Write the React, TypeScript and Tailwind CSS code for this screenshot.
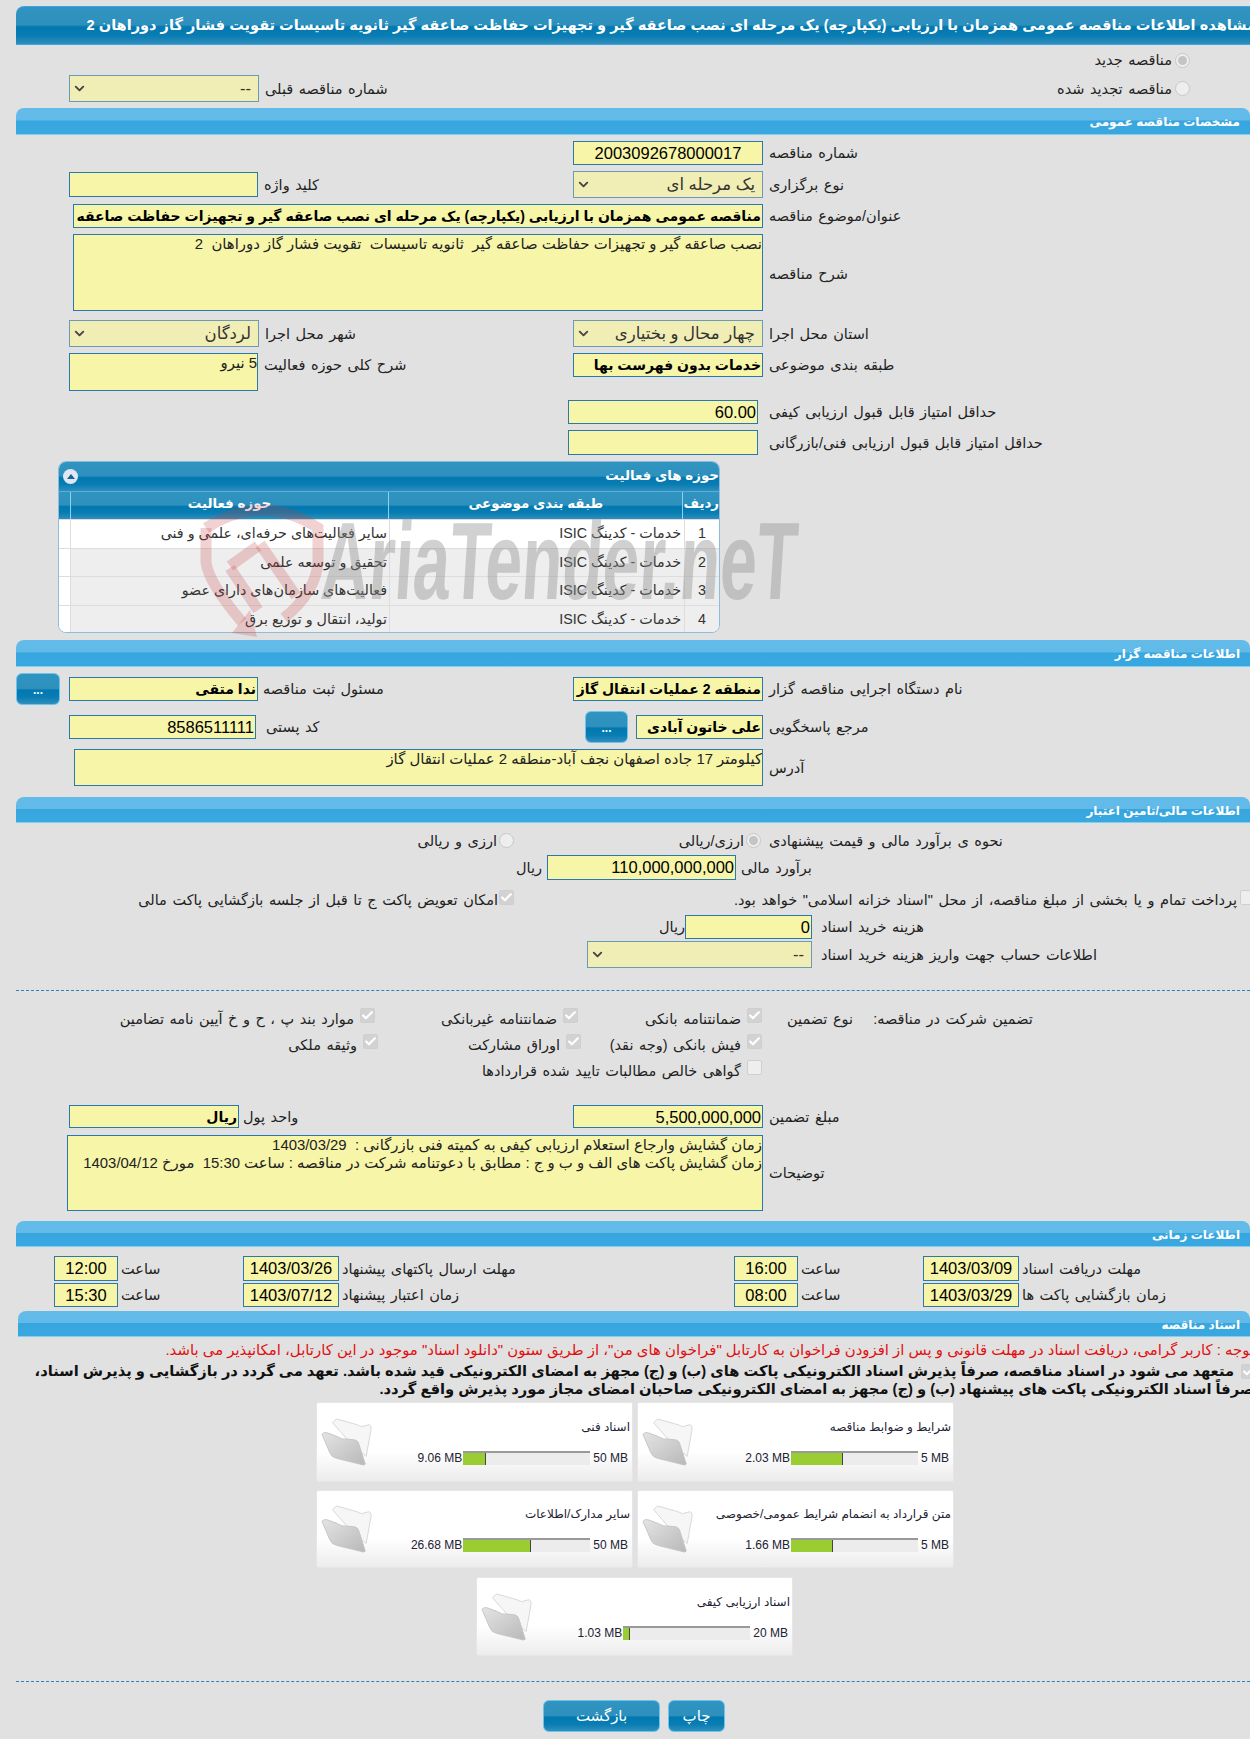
import { ReactNode } from "react";
import { ChevronDown, Check } from "lucide-react";

const DOCS = [
  [
    { title: "اسناد فنی", used: 9.06, max: 50 },
    { title: "شرایط و ضوابط مناقصه", used: 2.03, max: 5 },
  ],
  [
    { title: "سایر مدارک/اطلاعات", used: 26.68, max: 50 },
    { title: "متن قرارداد به انضمام شرایط عمومی/خصوصی", used: 1.66, max: 5 },
  ],
  [{ title: "اسناد ارزیابی کیفی", used: 1.03, max: 20 }],
];

const ACTIVITIES = [
  "سایر فعالیت‌های حرفه‌ای، علمی و فنی",
  "تحقیق و توسعه علمی",
  "فعالیت‌های سازمان‌های دارای عضو",
  "تولید، انتقال و توزیع برق",
];

const darkGrad =
  "bg-[linear-gradient(#3094c0_0%,#2e90bd_48%,#0078b0_54%,#0a7db3_78%,#2f8fbd_100%)]";

function Bar({ title, className }: { title: string; className: string }) {
  return (
    <div
      dir="rtl"
      className={`flex items-center rounded-tl-lg rounded-tr-lg border-b border-[#7fd0f0] bg-[linear-gradient(#63bbea_0%,#62bae9_46%,#37a6df_50%,#3aa8e0_100%)] pr-[10px] pt-[2px] text-[12px] font-bold text-white ${className}`}
    >
      {title}
    </div>
  );
}

function Lbl({ children, className = "" }: { children: ReactNode; className?: string }) {
  return (
    <span dir="rtl" className={`whitespace-nowrap pt-[2px] text-[14.5px] text-[#222] [word-spacing:1.5px] ${className}`}>
      {children}
    </span>
  );
}

function Box({
  children,
  className,
  bold,
}: {
  children?: ReactNode;
  className: string;
  bold?: boolean;
}) {
  return (
    <div
      dir="rtl"
      className={`overflow-hidden whitespace-nowrap border border-[#2b78ad] bg-[#f7f5a8] pr-[1px] leading-[22px] text-black ${
        bold ? "text-[14px] font-bold" : "text-[16.5px]"
      } ${className}`}
    >
      {children}
    </div>
  );
}

function Area({ children, className }: { children?: ReactNode; className: string }) {
  return (
    <div
      dir="rtl"
      className={`shrink-0 overflow-hidden whitespace-pre border border-[#2b78ad] bg-[#f7f5a8] pt-[1px] text-[14.9px] leading-[17.5px] text-[#222] ${className}`}
    >
      {children}
    </div>
  );
}

function Select({ value, className }: { value: string; className: string }) {
  return (
    <div
      className={`flex shrink-0 items-center justify-between border border-[#6a9bb5] bg-[#f0eeb4] pl-[2px] pr-[7px] text-[16.5px] text-[#333] ${className}`}
    >
      <ChevronDown size={15} strokeWidth={3} className="text-[#444]" />
      <span dir="rtl">{value}</span>
    </div>
  );
}

function Radio({ on }: { on?: boolean }) {
  return (
    <span className="flex h-[15px] w-[15px] shrink-0 items-center justify-center rounded-full border border-[#c8c8c8] bg-[#eeeeee]">
      {on && <span className="h-[9px] w-[9px] rounded-full bg-[#c4c4c4]" />}
    </span>
  );
}

function Tick({ on = true, className = "" }: { on?: boolean; className?: string }) {
  return (
    <span
      className={`flex h-[15px] w-[15px] shrink-0 items-center justify-center rounded-[2px] border border-[#cfcfcf] ${
        on ? "bg-[#d2d2d2]" : "bg-[#eeeeee]"
      } ${className}`}
    >
      {on && <Check size={13} strokeWidth={4} className="text-white" />}
    </span>
  );
}

function DotsButton({ className = "" }: { className?: string }) {
  return (
    <div
      className={`flex shrink-0 items-end justify-center rounded-md border border-[#6cc4ec] pb-[8px] text-[12px] font-bold leading-none text-white ${darkGrad} ${className}`}
    >
      ...
    </div>
  );
}

function Folder() {
  return (
    <svg width="54" height="48" viewBox="0 0 54 50" className="shrink-0">
      <defs>
        <linearGradient id="fold" x1="0" y1="0" x2="1" y2="1">
          <stop offset="0" stopColor="#e4e4e4" />
          <stop offset="1" stopColor="#b8b8b8" />
        </linearGradient>
      </defs>
      <path d="M12 5 L16 1 L34 6 Q38 7 42 9 L50 7 Q53 8 52 12 L47 40 L34 30 Z" fill="#f6f6f6" stroke="#d6d6d6" />
      <path d="M1 17 Q3 14 8 16 L16 19 Q22 23 28 22 L36 23 Q39 24 40 29 L46 48 Q45 50 40 48 L16 42 Q11 41 9 36 Z" fill="url(#fold)" stroke="#c4c4c4" />
    </svg>
  );
}

function DocCard({ title, used, max }: { title: string; used: number; max: number }) {
  return (
    <div className="flex h-full w-[317px] items-center rounded-[2px] border border-[#e6e6e6] bg-[linear-gradient(#ffffff_0%,#ffffff_62%,#ececec_100%)] pl-[3px] pr-[2px]">
      <Folder />
      <div className="flex flex-1 flex-col items-end">
        <span dir="rtl" className="text-[12px] leading-[16px] text-[#223]">
          {title}
        </span>
        <div className="mt-[16px] flex items-center text-[12px] leading-[14px] text-[#223]">
          <span className="mr-[1px] whitespace-nowrap">{used.toFixed(2)} MB</span>
          <div className="h-[14px] w-[127px] border-t-2 border-[#999999] bg-[#ececec]">
            <div
              className="h-full border-r border-[#444444] bg-[#9acd32]"
              style={{ width: `${(used / max) * 100}%` }}
            />
          </div>
          <span className="ml-[3px] mr-[2px] whitespace-nowrap">{max} MB</span>
        </div>
      </div>
    </div>
  );
}

function Watermark() {
  return (
    <div className="pointer-events-none absolute left-[200px] top-[500px] h-[140px] w-[610px]">
      <svg width="125" height="138" viewBox="0 0 125 138" className="absolute left-0 top-0" fill="none" stroke="#c43d3d" strokeOpacity="0.24" strokeWidth="11">
        <path d="M6 28 Q62 -8 118 28 V62 Q116 92 84 118" />
        <path d="M6 28 V62 Q8 82 42 122" />
        <path d="M60 44 L96 96" />
        <path d="M30 66 L58 46" />
        <path d="M30 68 L58 110" />
        <path d="M32 133 L57 137 L50 110 Z" fill="#c43d3d" fillOpacity="0.24" stroke="none" />
      </svg>
      <span className="absolute left-[122px] top-[6px] origin-left scale-x-[0.6] -skew-x-[6deg] whitespace-nowrap text-[110px] font-bold leading-[110px] text-[#8f8f8f] opacity-40">
        AriaTender.neT
      </span>
    </div>
  );
}

function ActivityPanel() {
  return (
    <div className="ml-[58px] mt-[6px] h-[172px] w-[662px] overflow-hidden rounded-lg border border-[#8dbcdc] bg-white text-[14.3px]">
      <div
        dir="rtl"
        className={`flex h-[29px] items-center justify-between pl-[4px] text-[13.4px] font-bold text-white ${darkGrad}`}
      >
        <span>حوزه های فعالیت</span>
        <span className="flex h-[15px] w-[15px] items-center justify-center rounded-full bg-[#dfe7f5]">
          <span className="border-x-[4px] border-b-[5px] border-x-transparent border-b-[#1d5f96]" />
        </span>
      </div>
      <div className={`flex h-[28px] border-t border-[#5aaedd] pb-[2px] text-[13.4px] font-bold text-white ${darkGrad}`}>
        <div className="-mb-[2px] w-[12px] border-r border-[#8fd0f0]" />
        <div className="-mb-[2px] flex w-[319px] items-center justify-center border-r border-[#8fd0f0] pb-[2px]">حوزه فعالیت</div>
        <div className="-mb-[2px] flex w-[295px] items-center justify-center border-r border-[#8fd0f0] pb-[2px]">طبقه بندی موضوعی</div>
        <div className="flex flex-1 items-center justify-center">ردیف</div>
      </div>
      {ACTIVITIES.map((a, i) => (
        <div key={i} className="flex h-[28.5px] border-t border-[#dddddd] first:border-[#6cc4ec] text-[#333]">
          <div className="w-[12px] border-r border-[#dddddd] bg-white" />
          <div className={`flex flex-1 ${i === 0 ? "bg-white" : "bg-[#eeeeee]"}`}>
            <div dir="rtl" className="flex w-[319px] items-center border-r border-[#dddddd] pr-[2px]">
              {a}
            </div>
            <div dir="rtl" className="flex w-[295px] items-center border-r border-[#dddddd] pr-[3px]">
              خدمات - کدینگ ISIC
            </div>
            <div className="flex flex-1 items-center justify-center">{i + 1}</div>
          </div>
        </div>
      ))}
    </div>
  );
}

export default function App() {
  return (
    <div className="relative h-[1739px] w-[1250px] overflow-hidden bg-[#e1e1e1] font-['Liberation_Sans','DejaVu_Sans',sans-serif]">
      {/* title */}
      <div
        dir="rtl"
        className={`ml-[16px] mt-[6px] flex h-[39px] w-[1240px] items-center rounded-tl-lg border-y border-[#3ea4e2] text-[14.55px] font-bold whitespace-nowrap text-white ${darkGrad}`}
      >
        مشاهده اطلاعات مناقصه عمومی همزمان با ارزیابی (یکپارچه) یک مرحله ای نصب صاعقه گیر و تجهیزات حفاظت صاعقه گیر ثانویه تاسیسات تقویت فشار گاز دوراهان 2
      </div>

      <div dir="rtl" className="flex h-[30px] items-center gap-[3px] pr-[60px]">
        <Radio on />
        <Lbl>مناقصه جدید</Lbl>
      </div>
      <div className="grid h-[27px] grid-cols-[573px_1fr]">
        <div className="flex items-center gap-[6px] pl-[69px]">
          <Select value="--" className="h-[27px] w-[190px]" />
          <Lbl>شماره مناقصه قبلی</Lbl>
        </div>
        <div dir="rtl" className="flex items-center gap-[3px] pr-[60px]">
          <Radio />
          <Lbl>مناقصه تجدید شده</Lbl>
        </div>
      </div>

      <Bar title="مشخصات مناقصه عمومی" className="ml-[16px] mt-[6px] h-[27px]" />

      <div className="mt-[6px] flex h-[24px] items-center gap-[6px] pl-[573px]">
        <Box className="h-[24px] w-[190px] !pr-0 text-center">2003092678000017</Box>
        <Lbl>شماره مناقصه</Lbl>
      </div>
      <div className="mt-[6px] grid h-[27px] grid-cols-[573px_1fr] items-center">
        <div className="flex items-center gap-[6px] pl-[69px]">
          <Box className="h-[25px] w-[189px]" />
          <Lbl>کلید واژه</Lbl>
        </div>
        <div className="flex items-center gap-[6px]">
          <Select value="یک مرحله ای" className="h-[27px] w-[190px]" />
          <Lbl>نوع برگزاری</Lbl>
        </div>
      </div>
      <div className="mt-[6px] flex h-[24px] items-center gap-[6px] pl-[73px]">
        <Box bold className="h-[24px] w-[690px]">
          مناقصه عمومی همزمان با ارزیابی (یکپارچه) یک مرحله ای نصب صاعقه گیر و تجهیزات حفاظت صاعقه گیر ثانویه تاسیسات تقویت فشار گاز دوراهان 2
        </Box>
        <Lbl>عنوان/موضوع مناقصه</Lbl>
      </div>
      <div className="mt-[6px] flex h-[77px] items-center gap-[6px] pl-[73px]">
        <Area className="h-[77px] w-[690px]">نصب صاعقه گیر و تجهیزات حفاظت صاعقه گیر  ثانویه تاسیسات  تقویت فشار گاز دوراهان  2</Area>
        <Lbl className="pt-[5px]">شرح مناقصه</Lbl>
      </div>
      <div className="mt-[9px] grid h-[27px] grid-cols-[573px_1fr] items-center">
        <div className="flex items-center gap-[6px] pl-[69px]">
          <Select value="لردگان" className="h-[27px] w-[190px]" />
          <Lbl>شهر محل اجرا</Lbl>
        </div>
        <div className="flex items-center gap-[6px]">
          <Select value="چهار محال و بختیاری" className="h-[27px] w-[190px]" />
          <Lbl>استان محل اجرا</Lbl>
        </div>
      </div>
      <div className="mt-[6px] grid h-[38px] grid-cols-[573px_1fr]">
        <div className="flex items-start gap-[6px] pl-[69px]">
          <Area className="h-[38px] w-[189px]">5 نیرو</Area>
          <Lbl>شرح کلی حوزه فعالیت</Lbl>
        </div>
        <div className="flex items-start gap-[6px]">
          <Box bold className="h-[24px] w-[190px]">خدمات بدون فهرست بها</Box>
          <Lbl>طبقه بندی موضوعی</Lbl>
        </div>
      </div>
      <div className="mt-[9px] flex h-[24px] items-center gap-[11px] pl-[568px]">
        <Box className="h-[24px] w-[190px]">60.00</Box>
        <Lbl>حداقل امتیاز قابل قبول ارزیابی کیفی</Lbl>
      </div>
      <div className="mt-[6px] flex h-[25px] items-center gap-[11px] pl-[568px]">
        <Box className="h-[25px] w-[190px]" />
        <Lbl>حداقل امتیاز قابل قبول ارزیابی فنی/بازرگانی</Lbl>
      </div>

      <ActivityPanel />

      <Bar title="اطلاعات مناقصه گزار" className="ml-[16px] mt-[7px] h-[27px]" />

      <div className="mt-[6px] grid h-[32px] grid-cols-[573px_1fr] items-center">
        <div className="flex items-center pl-[16px]">
          <DotsButton className="h-[32px] w-[44px]" />
          <Box bold className="ml-[9px] h-[24px] w-[189px]">ندا متقی</Box>
          <Lbl className="ml-[5px]">مسئول ثبت مناقصه</Lbl>
        </div>
        <div className="flex items-center gap-[6px]">
          <Box bold className="h-[24px] w-[190px]">منطقه 2 عملیات انتقال گاز</Box>
          <Lbl>نام دستگاه اجرایی مناقصه گزار</Lbl>
        </div>
      </div>
      <div className="mt-[6px] grid h-[32px] grid-cols-[573px_1fr] items-center">
        <div className="flex items-center gap-[10px] pl-[69px]">
          <Box className="h-[24px] w-[187px]">8586511111</Box>
          <Lbl>کد پستی</Lbl>
        </div>
        <div className="flex items-center pl-[12px]">
          <DotsButton className="h-[32px] w-[43px]" />
          <Box bold className="ml-[8px] h-[24px] w-[127px]">علی خاتون آبادی</Box>
          <Lbl className="ml-[6px]">مرجع پاسخگویی</Lbl>
        </div>
      </div>
      <div className="mt-[6px] flex h-[37px] items-center gap-[6px] pl-[74px]">
        <Area className="h-[37px] w-[689px]">کیلومتر 17 جاده اصفهان نجف آباد-منطقه 2 عملیات انتقال گاز</Area>
        <Lbl>آدرس</Lbl>
      </div>

      <Bar title="اطلاعات مالی/تامین اعتبار" className="ml-[16px] mt-[11px] h-[26px]" />

      <div className="mt-[6px] grid h-[22px] grid-cols-[514px_255px_1fr] items-center">
        <div className="flex items-center justify-end gap-[2px]">
          <Lbl>ارزی و ریالی</Lbl>
          <Radio />
        </div>
        <div className="flex items-center justify-end gap-[2px] pr-[8px]">
          <Lbl>ارزی/ریالی</Lbl>
          <Radio on />
        </div>
        <Lbl className="justify-self-start">نحوه ی برآورد مالی و قیمت پیشنهادی</Lbl>
      </div>
      <div className="mt-[4px] grid h-[25px] grid-cols-[542px_1fr] items-center">
        <div className="text-right">
          <Lbl>ریال</Lbl>
        </div>
        <div className="flex items-center gap-[5px] pl-[5px]">
          <Box className="h-[25px] w-[189px]">110,000,000,000</Box>
          <Lbl>برآورد مالی</Lbl>
        </div>
      </div>
      <div className="mt-[8px] grid h-[18px] grid-cols-[514px_736px] items-center">
        <div className="flex items-center justify-end gap-[1px]">
          <Lbl>امکان تعویض پاکت ج تا قبل از جلسه بازگشایی پاکت مالی</Lbl>
          <Tick className="-mt-[4px]" />
        </div>
        <div className="flex items-center justify-end gap-[3px]">
          <Lbl>پرداخت تمام و یا بخشی از مبلغ مناقصه، از محل &quot;اسناد خزانه اسلامی&quot; خواهد بود.</Lbl>
          <Tick on={false} className="-mr-[5px] -mt-[4px]" />
        </div>
      </div>
      <div className="mt-[9px] grid h-[24px] grid-cols-[685px_1fr] items-center">
        <div className="text-right">
          <Lbl>ریال</Lbl>
        </div>
        <div className="flex items-center gap-[9px]">
          <Box className="h-[24px] w-[127px]">0</Box>
          <Lbl>هزینه خرید اسناد</Lbl>
        </div>
      </div>
      <div className="mt-[2px] flex h-[27px] items-center gap-[9px] pl-[587px]">
        <Select value="--" className="h-[27px] w-[225px]" />
        <Lbl>اطلاعات حساب جهت واریز هزینه خرید اسناد</Lbl>
      </div>

      <div className="ml-[16px] mt-[22px] border-t border-dashed border-[#2b84b8]" />

      <div className="mt-[15px] grid h-[26px] grid-cols-[375px_203px_184px_1fr] items-center">
        <div className="flex items-center justify-end gap-[6px]">
          <Lbl>موارد بند پ ، ح و خ آیین نامه تضامین</Lbl>
          <Tick className="-mt-[8px]" />
        </div>
        <div className="flex items-center justify-end gap-[6px]">
          <Lbl>ضمانتنامه غیربانکی</Lbl>
          <Tick className="-mt-[8px]" />
        </div>
        <div className="flex items-center justify-end gap-[6px]">
          <Lbl>ضمانتنامه بانکی</Lbl>
          <Tick className="-mt-[8px]" />
        </div>
        <div className="flex items-center gap-[20px] pl-[25px]">
          <Lbl>نوع تضمین</Lbl>
          <Lbl>تضمین شرکت در مناقصه:</Lbl>
        </div>
      </div>
      <div className="grid h-[26px] grid-cols-[378px_203px_181px_1fr] items-center">
        <div className="flex items-center justify-end gap-[6px]">
          <Lbl>وثیقه ملکی</Lbl>
          <Tick className="-mt-[8px]" />
        </div>
        <div className="flex items-center justify-end gap-[6px]">
          <Lbl>اوراق مشارکت</Lbl>
          <Tick className="-mt-[8px]" />
        </div>
        <div className="flex items-center justify-end gap-[6px]">
          <Lbl>فیش بانکی (وجه نقد)</Lbl>
          <Tick className="-mt-[8px]" />
        </div>
      </div>
      <div className="flex h-[26px] w-[762px] items-center justify-end gap-[6px]">
        <Lbl>گواهی خالص مطالبات تایید شده قراردادها</Lbl>
        <Tick on={false} className="-mt-[8px]" />
      </div>

      <div className="mt-[21px] grid h-[23px] grid-cols-[573px_1fr] items-center">
        <div className="flex items-center gap-[4px] pl-[69px]">
          <Box bold className="h-[23px] w-[170px]">ریال</Box>
          <Lbl>واحد پول</Lbl>
        </div>
        <div className="flex items-center gap-[6px]">
          <Box className="h-[23px] w-[190px]">5,500,000,000</Box>
          <Lbl>مبلغ تضمین</Lbl>
        </div>
      </div>
      <div className="mt-[7px] flex h-[76px] items-center gap-[6px] pl-[67px]">
        <Area className="h-[76px] w-[696px]">
          {"زمان گشایش وارجاع استعلام ارزیابی کیفی به کمیته فنی بازرگانی :  1403/03/29\nزمان گشایش پاکت های الف و ب و ج : مطابق با دعوتنامه شرکت در مناقصه : ساعت 15:30  مورخ 1403/04/12"}
        </Area>
        <Lbl>توضیحات</Lbl>
      </div>

      <Bar title="اطلاعات زمانی" className="ml-[16px] mt-[10px] h-[26px]" />

      <div className="mt-[9px] grid h-[25px] grid-cols-[189px_491px_189px_1fr] items-center pl-[54px]">
        <div className="flex items-center gap-[3px]">
          <Box className="h-[25px] w-[64px] !pr-0 text-center">12:00</Box>
          <Lbl>ساعت</Lbl>
        </div>
        <div className="flex items-center gap-[3px]">
          <Box className="h-[25px] w-[96px] !pr-0 text-center">1403/03/26</Box>
          <Lbl>مهلت ارسال پاکتهای پیشنهاد</Lbl>
        </div>
        <div className="flex items-center gap-[3px]">
          <Box className="h-[25px] w-[64px] !pr-0 text-center">16:00</Box>
          <Lbl>ساعت</Lbl>
        </div>
        <div className="flex items-center gap-[3px]">
          <Box className="h-[25px] w-[96px] !pr-0 text-center">1403/03/09</Box>
          <Lbl>مهلت دریافت اسناد</Lbl>
        </div>
      </div>
      <div className="mt-[2px] grid h-[24px] grid-cols-[189px_491px_189px_1fr] items-center pl-[54px]">
        <div className="flex items-center gap-[3px]">
          <Box className="h-[24px] w-[64px] !pr-0 text-center">15:30</Box>
          <Lbl>ساعت</Lbl>
        </div>
        <div className="flex items-center gap-[3px]">
          <Box className="h-[24px] w-[96px] !pr-0 text-center">1403/07/12</Box>
          <Lbl>زمان اعتبار پیشنهاد</Lbl>
        </div>
        <div className="flex items-center gap-[3px]">
          <Box className="h-[24px] w-[64px] !pr-0 text-center">08:00</Box>
          <Lbl>ساعت</Lbl>
        </div>
        <div className="flex items-center gap-[3px]">
          <Box className="h-[24px] w-[96px] !pr-0 text-center">1403/03/29</Box>
          <Lbl>زمان بازگشایی پاکت ها</Lbl>
        </div>
      </div>

      <Bar title="اسناد مناقصه" className="ml-[18px] mt-[4px] h-[26px]" />

      <div dir="rtl" className="mt-[3px] h-[20px] w-[1254px] whitespace-nowrap text-[14.9px] leading-[20px] text-[#e01010]">
        توجه : کاربر گرامی، دریافت اسناد در مهلت قانونی و پس از افزودن فراخوان به کارتابل &quot;فراخوان های من&quot;، از طریق ستون &quot;دانلود اسناد&quot; موجود در این کارتابل، امکانپذیر می باشد.
      </div>
      <div dir="rtl" className="mt-[2px] flex h-[18px] w-[1254px] items-center gap-[7px] whitespace-nowrap pr-[1px] text-[14.7px] font-bold text-[#111]">
        <Tick className="-mr-[3px]" />
        متعهد می شود در اسناد مناقصه، صرفاً پذیرش اسناد الکترونیکی پاکت های (ب) و (ج) مجهز به امضای الکترونیکی قید شده باشد. تعهد می گردد در بازگشایی و پذیرش اسناد،
      </div>
      <div dir="rtl" className="h-[18px] w-[1254px] whitespace-nowrap text-[14.7px] font-bold leading-[18px] text-[#111]">
        صرفاً اسناد الکترونیکی پاکت های پیشنهاد (ب) و (ج) مجهز به امضای الکترونیکی صاحبان امضای مجاز مورد پذیرش واقع گردد.
      </div>

      <div className="mt-[4px] flex h-[80px] gap-[4px] pl-[316px]">
        {DOCS[0].map((d) => (
          <DocCard key={d.title} {...d} />
        ))}
      </div>
      <div className="mt-[8px] flex h-[78px] gap-[4px] pl-[316px]">
        {DOCS[1].map((d) => (
          <DocCard key={d.title} {...d} />
        ))}
      </div>
      <div className="mt-[9px] flex h-[79px] pl-[476px]">
        <DocCard {...DOCS[2][0]} />
      </div>

      <div className="ml-[16px] mt-[25px] border-t border-dashed border-[#2b84b8]" />

      <div className="ml-[543px] mt-[18px] flex h-[32px] gap-[8px] text-[15px] text-white">
        <div className={`flex w-[117px] items-center justify-center rounded-md border border-[#6cc4ec] ${darkGrad}`}>بازگشت</div>
        <div className={`flex w-[57px] items-center justify-center rounded-md border border-[#6cc4ec] ${darkGrad}`}>چاپ</div>
      </div>

      <Watermark />
    </div>
  );
}
